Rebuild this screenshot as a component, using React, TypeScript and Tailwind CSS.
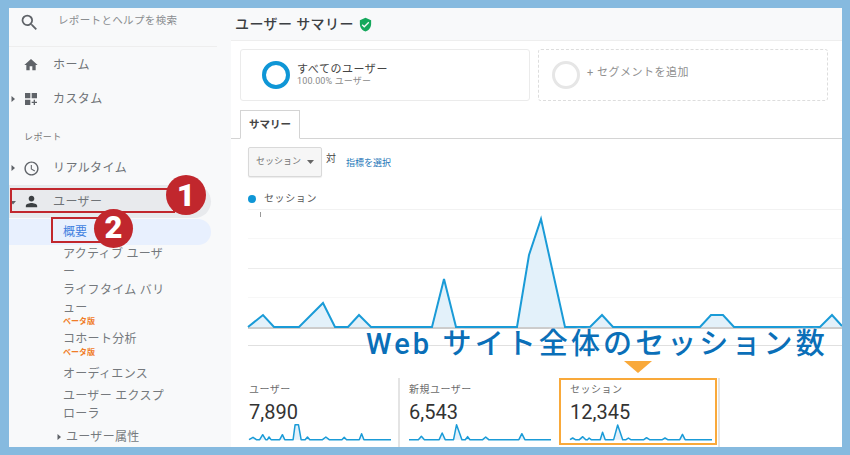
import { MdAccessTime, MdDashboardCustomize, MdHome, MdPerson, MdSearch, MdVerifiedUser } from 'react-icons/md';

const font = 'font-["Roboto","Noto_Sans_CJK_JP",sans-serif]';

function Caret({ down = false, className = '' }: { down?: boolean; className?: string }) {
  return (
    <svg width="6" height="8" viewBox="0 0 6 8" className={className}>
      <polygon points={down ? '0,3 6,3 3,6.5' : '1.5,1 5,4 1.5,7'} fill="#5f6368" />
    </svg>
  );
}

function NavRow({ icon, label, caret, height }: { icon: React.ReactNode; label: string; caret?: boolean; height: string }) {
  return (
    <div className={`relative flex items-center ${height}`}>
      {caret && <Caret className="absolute left-[1px]" />}
      <span className="flex w-[44px] justify-center text-[#5f6368]">{icon}</span>
      <span className="text-[12px] tracking-[0.4px] text-[#6f7377]">{label}</span>
    </div>
  );
}

function SubItem({ children, className = '' }: { children: React.ReactNode; className?: string }) {
  return <div className={`pl-[54px] text-[12px] leading-[18px] tracking-[0.3px] text-[#75797d] ${className}`}>{children}</div>;
}

function Beta({ className = '' }: { className?: string }) {
  return <div className={`h-[9px] pl-[54px] text-[8px] leading-[9px] font-bold text-[#f07c28] ${className}`}>ベータ版</div>;
}

function Sparkline({ box, points }: { box: string; points: string }) {
  return (
    <svg width="142" height="20" viewBox={box} preserveAspectRatio="none" className="block overflow-visible">
      <polygon points={points} fill="#e3f1fa" />
      <polyline points={points} fill="none" stroke="#1a9bd7" strokeWidth="4.5" strokeLinejoin="round" />
    </svg>
  );
}

function Metric({ label, value, children, className }: { label: string; value: string; children: React.ReactNode; className: string }) {
  return (
    <div className={className}>
      <div className="text-[10px] leading-[14px] tracking-[0.5px] text-[#6b6b6b]">{label}</div>
      <div className="mt-[3px] text-[20px] leading-[24px] text-[#333333]">{value}</div>
      <div>{children}</div>
    </div>
  );
}

function Chart() {
  const line = '248,327 263,315 274,327 299,327 323,303 335,327 348,327 359,315 371,327 432,327 444,279 456,327 517,327 529,255 541,219 565,327 590,327 602,315 613,327 700,327 711,315 723,315 734,327 820,327 832,315 842,326';
  return (
    <svg width="602" height="145" viewBox="240 205 602 145" className="block">
      <line x1="248" x2="842" y1="209.5" y2="209.5" stroke="#f2f2f2" />
      <line x1="248" x2="842" y1="238.5" y2="238.5" stroke="#f7f7f7" />
      <line x1="248" x2="842" y1="268.5" y2="268.5" stroke="#ececec" />
      <line x1="248" x2="842" y1="297.5" y2="297.5" stroke="#f7f7f7" />
      <line x1="248" x2="842" y1="345.5" y2="345.5" stroke="#e0e0e0" />
      <line x1="260.5" x2="260.5" y1="212" y2="217" stroke="#999999" />
      <polygon points={`${line} 842,327 248,327`} fill="#e3f1fa" />
      <line x1="248" x2="842" y1="328" y2="328" stroke="#9a9a9a" />
      <polyline points={line} fill="none" stroke="#1a9bd7" strokeWidth="2" />
    </svg>
  );
}

export default function App() {
  return (
    <div className={`relative h-[455px] w-[850px] overflow-hidden bg-[#86badf] pt-[8px] pl-[9px] ${font}`}>
      <div className="flex h-[439px] w-[833px] overflow-hidden">
        <aside className="w-[222px] shrink-0 bg-[#f8f9fa]">
          <div className="flex h-[39px] w-[208px] items-start border-b border-[#eeeeee] pt-[4px]">
            <span className="flex w-[40px] justify-center text-[#5f6368]"><MdSearch size={21} /></span>
            <span className="ml-[9px] text-[10.5px] leading-[18px] tracking-[0.35px] text-[#8a8d90]">レポートとヘルプを検索</span>
          </div>
          <NavRow icon={<MdHome size={16} />} label="ホーム" height="h-[35px]" />
          <NavRow icon={<MdDashboardCustomize size={16} />} label="カスタム" caret height="h-[33px]" />
          <div className="mt-[11px] flex h-[24px] items-center pl-[15px] text-[9px] tracking-[0.4px] text-[#777777]">レポート</div>
          <div className="mt-[1px]">
            <NavRow icon={<MdAccessTime size={17} />} label="リアルタイム" caret height="h-[34px]" />
          </div>
          <div className="relative flex h-[33px] w-[202px] items-center rounded-r-full bg-[#e8eaed]">
            <Caret down className="absolute left-[1px]" />
            <span className="flex w-[44px] justify-center text-[#3c4043]"><MdPerson size={17} /></span>
            <span className="text-[12px] tracking-[0.4px] text-[#6f7377]">ユーザー</span>
          </div>
          <div className="mt-[1px] flex h-[26px] w-[202px] items-center rounded-r-full bg-[#e8f0fe] pl-[54px] text-[12px] text-[#3f7fe0]">概要</div>
          <SubItem>アクティブ ユーザ<br />ー</SubItem>
          <SubItem>ライフタイム バリ<br />ュー</SubItem>
          <Beta />
          <SubItem className="mt-[4px]">コホート分析</SubItem>
          <Beta />
          <SubItem className="mt-[8px]">オーディエンス</SubItem>
          <SubItem className="mt-[4px]">ユーザー エクスプ<br />ローラ</SubItem>
          <div className="mt-[5px] flex h-[18px] items-center pl-[47px] text-[12px] tracking-[0.3px] text-[#75797d]">
            <Caret className="mr-[4px]" />
            ユーザー属性
          </div>
        </aside>

        <main className="min-w-0 flex-1 bg-white">
          <div className="flex h-[33px] items-center gap-[4px] border-b border-[#eeeeee] bg-[#f8f9fa] pl-[4px]">
            <span className="text-[14px] font-medium tracking-[0.4px] text-[#3c4043]">ユーザー サマリー</span>
            <MdVerifiedUser size={15} className="text-[#14a85c]" />
          </div>

          <div className="mt-[8px] ml-[9px] flex gap-[8px]">
            <div className="flex h-[52px] w-[290px] items-center rounded-[3px] border border-[#ebebeb] pl-[21px]">
              <span className="h-[28px] w-[28px] rounded-full border-[4px] border-[#0f96d6]" />
              <div className="ml-[7px]">
                <div className="text-[11px] leading-[13px] tracking-[0.55px] text-[#444444]">すべてのユーザー</div>
                <div className="text-[9px] leading-[11px] tracking-[0.15px] text-[#8a8a8a]">100.00% ユーザー</div>
              </div>
            </div>
            <div className="flex h-[52px] w-[290px] rounded-[3px] border border-dashed border-[#dddddd] pt-[11px] pl-[13px]">
              <span className="h-[28px] w-[28px] rounded-full border-[3px] border-[#e6e6e6]" />
              <span className="mt-[5px] ml-[7px] text-[11px] leading-[14px] tracking-[0.5px] text-[#8f8f8f]">+ セグメントを追加</span>
            </div>
          </div>

          <div className="mt-[9px] flex h-[29px] border-b border-[#d4d4d4] pl-[9px]">
            <div className="flex h-[29px] w-[60px] items-center justify-center border border-b-white border-[#d4d4d4] bg-white text-[10.5px] font-bold text-[#444444]">サマリー</div>
          </div>

          <div className="mt-[8px] ml-[17px] flex items-start">
            <div className="flex h-[30px] w-[74px] items-center justify-between rounded-[2px] border border-[#d9d9d9] bg-[#f6f6f6] px-[7px] shadow-[0_1px_1px_rgba(0,0,0,0.08)]">
              <span className="text-[9px] text-[#777777]">セッション</span>
              <svg width="7" height="4" viewBox="0 0 7 4"><polygon points="0,0 7,0 3.5,4" fill="#666666" /></svg>
            </div>
            <span className="mt-[5px] ml-[4px] text-[10px] leading-[14px] text-[#444444]">対</span>
            <span className="mt-[10px] ml-[10px] text-[9px] leading-[13px] text-[#1f77b8]">指標を選択</span>
          </div>

          <div className="mt-[14px] ml-[17px] flex h-[15px] items-center">
            <span className="h-[8px] w-[8px] rounded-full bg-[#0f96d6]" />
            <span className="ml-[8px] text-[10px] tracking-[0.6px] text-[#555555]">セッション</span>
          </div>

          <div className="-mt-[1px] ml-[9px]"><Chart /></div>

          <div className="mt-[28px] ml-[9px] flex h-[69px]">
            <Metric label="ユーザー" value="7,890" className="w-[160px] border-r-2 border-[#e4e4e4] pt-[5px] pl-[9px]">
              <Sparkline
                box="30 161 425 60"
                points="30,208 42,201 52,208 62,208 71,193 80,208 85,208 90,200 96,208 122,208 130,193 137,208 162,208 168,163 178,163 186,208 198,208 205,200 212,208 250,208 260,200 270,208 308,208 315,201 322,208 360,208 367,190 374,208 455,208"
              />
            </Metric>
            <Metric label="新規ユーザー" value="6,543" className="w-[159px] pt-[5px] pl-[9px]">
              <Sparkline
                box="512 161 424 60"
                points="512,208 540,208 549,198 558,208 602,208 611,188 620,208 645,208 654,163 670,208 680,208 687,199 694,208 732,208 741,200 750,208 840,208 849,190 858,208 936,208"
              />
            </Metric>
            <div className="h-[69px] w-[161px] border-r-2 border-[#e4e4e4] pr-[2px]">
              <Metric label="セッション" value="12,345" className="h-[67px] w-[158px] border-2 border-[#f9a93a] pt-[3px] pl-[9px]">
                <Sparkline
                  box="275 205 423 60"
                  points="275,252 283,247 291,252 303,252 313,243 322,252 327,252 332,247 338,252 365,252 372,230 380,252 405,252 417,208 432,252 442,252 449,247 456,252 495,252 503,246 512,252 550,252 558,247 566,252 602,252 610,236 618,252 698,252"
                />
              </Metric>
            </div>
          </div>
        </main>
      </div>

      <div className="absolute top-[188px] left-[10px] h-[25px] w-[165px] border-2 border-[#c1272d]" />
      <div className="absolute top-[175px] left-[166px] flex h-[40px] w-[40px] items-center justify-center rounded-full bg-[#c1272d] text-[32px] font-black text-white">1</div>
      <div className="absolute top-[217px] left-[51px] h-[26px] w-[60px] border-2 border-[#c1272d]" />
      <div className="absolute top-[209px] left-[94px] flex h-[39px] w-[39px] items-center justify-center rounded-full bg-[#c1272d] text-[31px] font-black text-white">2</div>

      <div className="absolute top-[324px] left-[366px] text-[29px] leading-[40px] font-medium tracking-[3.1px] whitespace-nowrap text-[#0a6fb8] [text-shadow:0_0_3px_#ffffff]">Web サイト全体のセッション数</div>
      <svg width="28" height="12" viewBox="0 0 28 12" className="absolute top-[361px] left-[624px]"><polygon points="0,0 28,0 14,12" fill="#f9a93a" /></svg>
    </div>
  );
}
